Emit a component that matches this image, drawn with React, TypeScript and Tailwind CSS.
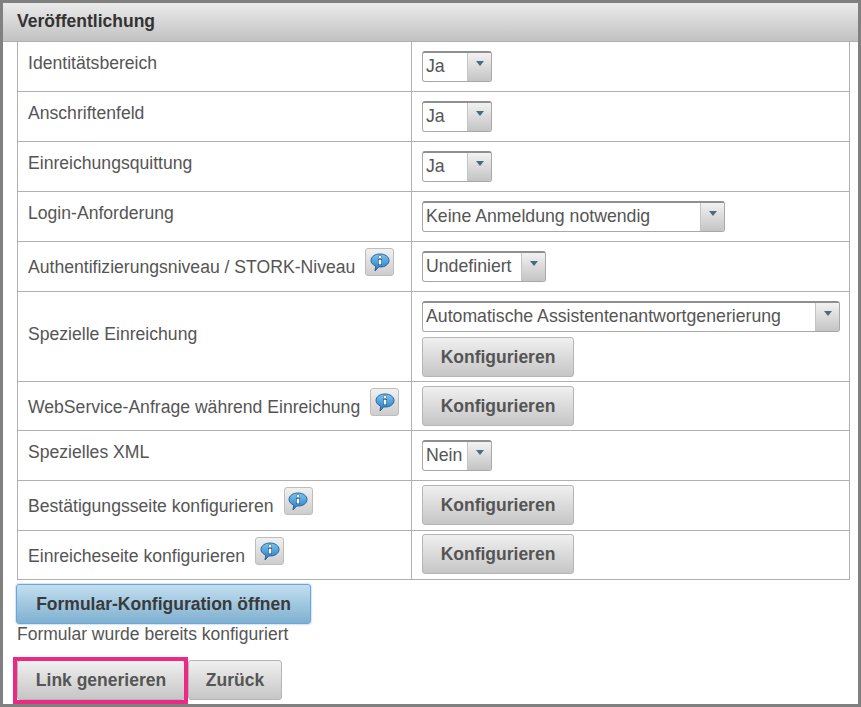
import type { ReactNode } from "react";

function Select({ label, width }: { label: string; width: string }) {
  return (
    <div className={`flex h-[31px] ${width} overflow-hidden rounded-[3px] border border-[#a8a8a8] border-t-2 border-t-[#8f8f8f] bg-white`}>
      <div className="flex-1 overflow-hidden whitespace-nowrap pl-[3px] text-[17.7px] leading-[26px] text-[#555]">{label}</div>
      <div className="flex w-[24px] shrink-0 items-start justify-center border-l border-[#c4c4c4] bg-gradient-to-b from-[#f2f2f2] to-[#c4c4c4] pt-[8px]">
        <svg width="8" height="5" viewBox="0 0 8 5">
          <path d="M0 0h8L4 5z" fill="#4a6b7a" />
        </svg>
      </div>
    </div>
  );
}

function Button({ label, className = "" }: { label: string; className?: string }) {
  return (
    <button
      type="button"
      className={`h-[40px] rounded-[3px] border border-[#b5b5b5] bg-gradient-to-b from-[#f0f0f0] to-[#c6c6c6] text-[17.5px] font-bold text-[#555] ${className}`}
    >
      {label}
    </button>
  );
}

function Info() {
  return (
    <div className="flex h-[28px] w-[29px] shrink-0 items-center justify-center rounded-[3px] border border-[#bdbdbd] bg-gradient-to-b from-[#f0f0f0] to-[#cdcdcd]">
      <svg width="20" height="19" viewBox="0 0 20 19">
        <defs>
          <linearGradient id="bubble" x1="0" y1="0" x2="0" y2="1">
            <stop offset="0" stopColor="#7cc4f0" />
            <stop offset="1" stopColor="#2478c4" />
          </linearGradient>
        </defs>
        <path d="M10 1c5 0 9 2.700 9 6.500S15 14 10.500 14c-.6 0-1.200 0-1.800-.1L5 18l.8-5C3 12 1 10 1 7.500 1 3.700 5 1 10 1z" fill="url(#bubble)" stroke="#1c5a94" strokeWidth="0.9" />
        <rect x="8.300" y="6.400" width="3.400" height="5.400" fill="#fff" stroke="#164f86" strokeWidth="0.6" />
        <circle cx="10" cy="4" r="1.700" fill="#fff" stroke="#164f86" strokeWidth="0.5" />
      </svg>
    </div>
  );
}

function Row({ height, label, info, children, center }: {
  height: string;
  label: string;
  info?: boolean;
  center?: boolean;
  children: ReactNode;
}) {
  return (
    <div className={`flex ${height} border-b border-[#b0b0b0]`}>
      <div className={`flex w-[394px] shrink-0 border-r border-[#b0b0b0] pl-[10px] ${center ? "items-center pb-[6px]" : info ? "items-start pt-[6px]" : "items-start pt-[9px]"}`}>
        <span className={`whitespace-nowrap text-[17.6px] leading-[24px] text-[#555] ${info ? "mt-[7px]" : ""}`}>{label}</span>
        {info && <div className="ml-[10px]"><Info /></div>}
      </div>
      <div className="flex flex-1 flex-col items-start gap-[5px] pl-[10px] pt-[9px]">{children}</div>
    </div>
  );
}

export default function App() {
  return (
    <div className="h-[707px] w-[861px] overflow-hidden border-[3px] border-[#808080] bg-white [font-family:'Liberation_Sans',Arial,sans-serif]">
      <div className="flex h-[39px] items-center border-b border-[#b0b0b0] bg-gradient-to-b from-[#ebebeb] to-[#c2c2c2] pb-[2px] pl-[14px] text-[17.5px] font-bold text-[#333]">
        Veröffentlichung
      </div>
      <div className="ml-[14px] w-[833px] border-x border-[#b0b0b0]">
        <Row height="h-[50px]" label="Identitätsbereich"><Select label="Ja" width="w-[70px]" /></Row>
        <Row height="h-[50px]" label="Anschriftenfeld"><Select label="Ja" width="w-[70px]" /></Row>
        <Row height="h-[50px]" label="Einreichungsquittung"><Select label="Ja" width="w-[70px]" /></Row>
        <Row height="h-[50px]" label="Login-Anforderung"><Select label="Keine Anmeldung notwendig" width="w-[303px]" /></Row>
        <Row height="h-[50px]" label="Authentifizierungsniveau / STORK-Niveau" info><Select label="Undefiniert" width="w-[124px]" /></Row>
        <Row height="h-[90px]" label="Spezielle Einreichung" center>
          <Select label="Automatische Assistentenantwortgenerierung" width="w-[418px]" />
          <Button label="Konfigurieren" className="w-[152px]" />
        </Row>
        <Row height="h-[49px]" label="WebService-Anfrage während Einreichung" info><Button label="Konfigurieren" className="-mt-[5px] w-[152px]" /></Row>
        <Row height="h-[50px]" label="Spezielles XML"><Select label="Nein" width="w-[70px]" /></Row>
        <Row height="h-[50px]" label="Bestätigungsseite konfigurieren" info><Button label="Konfigurieren" className="-mt-[5px] w-[152px]" /></Row>
        <Row height="h-[49px]" label="Einreicheseite konfigurieren" info><Button label="Konfigurieren" className="-mt-[6px] w-[152px]" /></Row>
      </div>
      <div className="pl-[13px] pt-[4px]">
        <button
          type="button"
          className="h-[40px] w-[295px] rounded-[3px] border border-[#6ea5d8] bg-gradient-to-b from-[#c3dff0] to-[#7fb0d0] text-[17.5px] font-bold text-[#3a3a3a] shadow-[0_0_2px_#6ea5d8]"
        >
          Formular-Konfiguration öffnen
        </button>
        <div className="pl-px text-[17.5px] leading-[20px] text-[#555]">Formular wurde bereits konfiguriert</div>
        <div className="relative mt-[16px] ml-px flex">
          <Button label="Link generieren" className="w-[168px]" />
          <Button label="Zurück" className="ml-[3px] w-[94px]" />
          <div className="absolute -top-[3px] -left-[4px] h-[47px] w-[175px] border-[4px] border-[#ec2a86]" />
        </div>
      </div>
    </div>
  );
}
